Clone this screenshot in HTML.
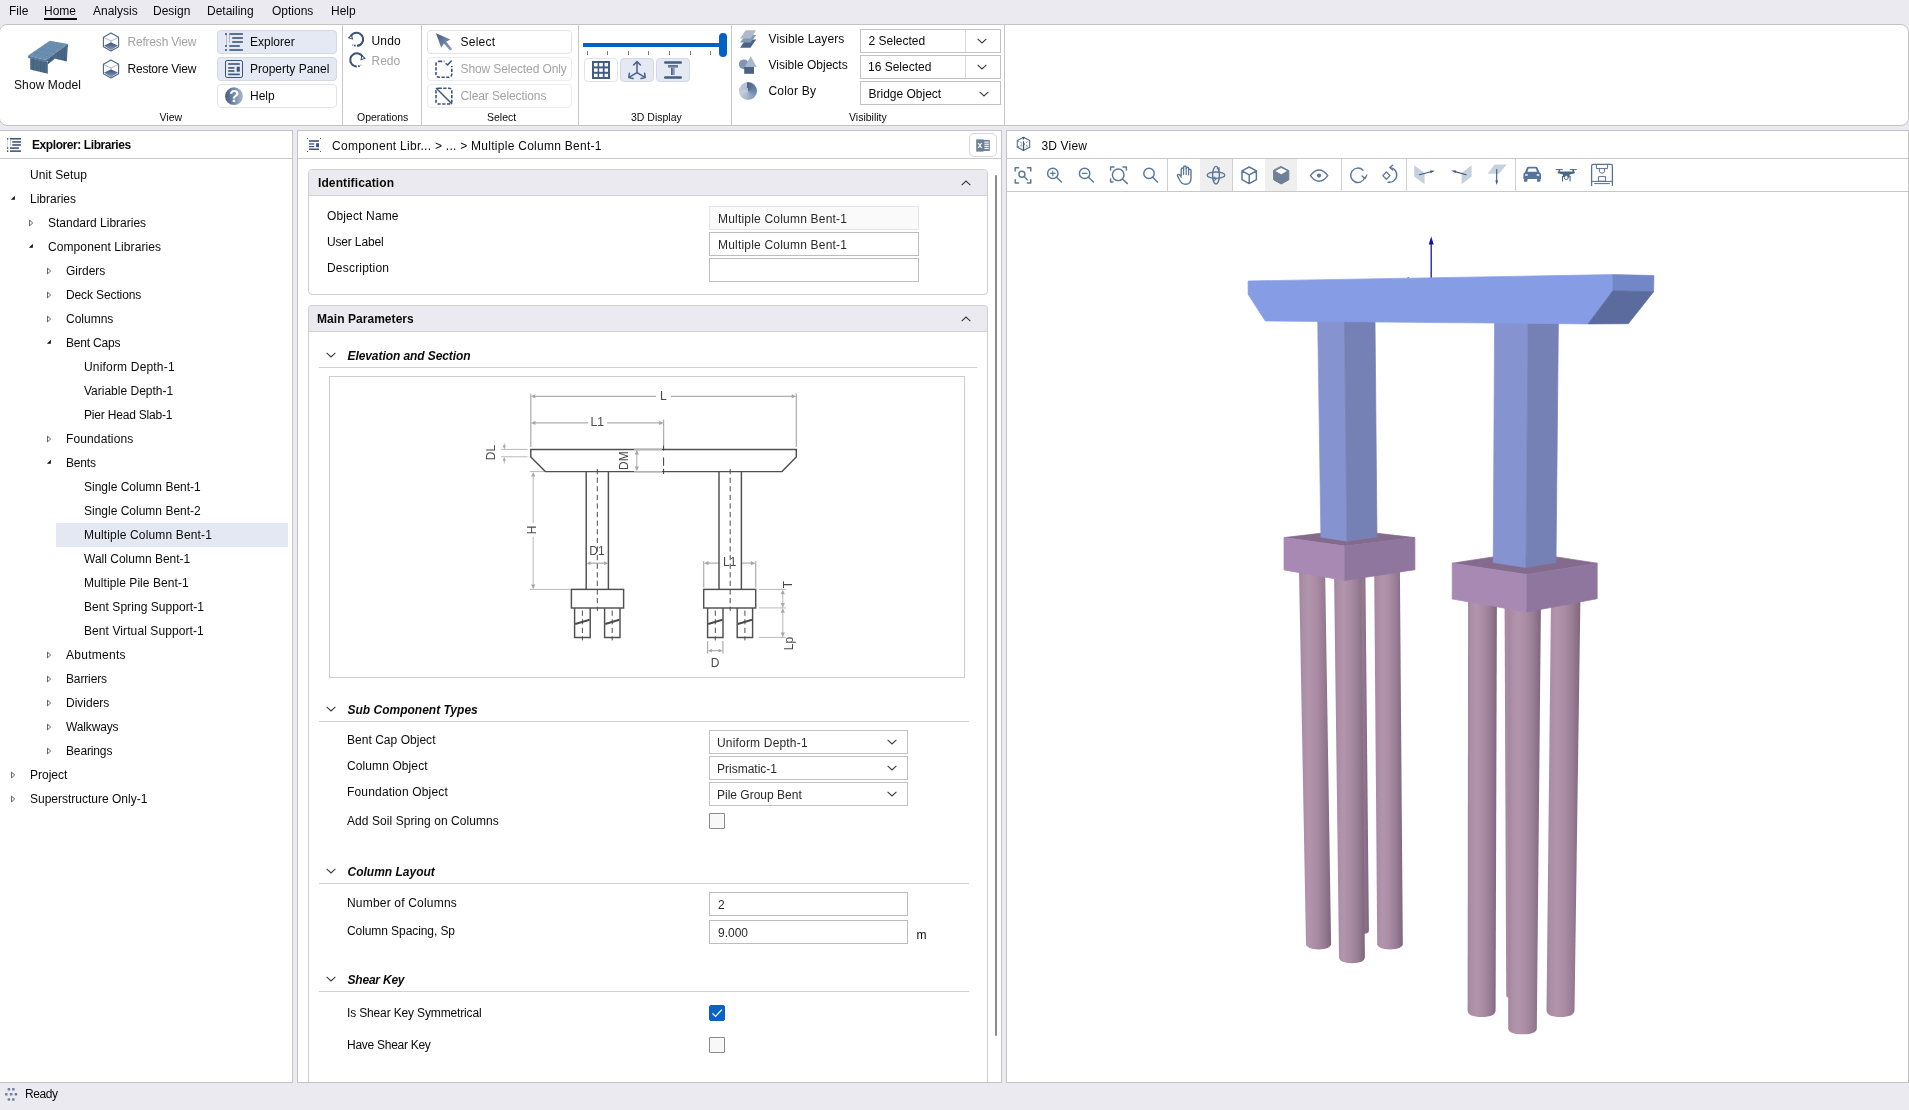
<!DOCTYPE html>
<html>
<head>
<meta charset="utf-8">
<title>Bridge Modeler</title>
<style>
*{box-sizing:border-box;margin:0;padding:0}
html,body{width:1909px;height:1110px;overflow:hidden}
body{background:#ECEAF1;font-family:"Liberation Sans",sans-serif;font-size:12px;color:#111;position:relative}
.a{position:absolute}
.t{position:absolute;white-space:nowrap;line-height:16px;font-size:12px;color:#0A0A0A}
.g{color:#A3A3A3}
.b{font-weight:700}
.bi{font-weight:700;font-style:italic}
.lbl{position:absolute;white-space:nowrap;line-height:14px;font-size:10.5px;color:#0A0A0A}
.panel{position:absolute;background:#fff;border:1px solid #C4C4C4}
.hl{position:absolute;height:1px;background:#C8C8C8}
.vl{position:absolute;width:1px;background:#C8C8C8}
.btn{position:absolute;border:1px solid #E3E3E6;border-radius:4px;background:#fff}
.btn.on{background:#E4E9F3;border-color:#D3D8E2}
.combo{position:absolute;border:1px solid #C2C2C2;background:#fff}
.inp{position:absolute;border:1px solid #BDBDBD;background:#fff}
.chk{position:absolute;width:16px;height:16px;border:1px solid #8A8A8A;background:#F8F8F8;border-radius:1px}
.sec{position:absolute;border:1px solid #CFCFD2;border-radius:4px;background:#fff;overflow:hidden}
.sech{position:absolute;left:0;top:0;right:0;background:#ECEAF1;border-bottom:1px solid #CFCFD2}
svg{position:absolute;overflow:visible}
</style>
</head>
<body>
<div id="root" style="position:absolute;left:0;top:0;width:1909px;height:1110px;will-change:transform">

<!-- ===== MENU BAR ===== -->
<div class="t" style="left:9px;top:3px">File</div>
<div class="t" style="left:44px;top:3px">Home</div>
<div class="a" style="left:44px;top:18px;width:33px;height:2px;background:#0A0A0A"></div>
<div class="t" style="left:93px;top:3px">Analysis</div>
<div class="t" style="left:153px;top:3px">Design</div>
<div class="t" style="left:207px;top:3px">Detailing</div>
<div class="t" style="left:272px;top:3px">Options</div>
<div class="t" style="left:331px;top:3px">Help</div>

<!-- ===== RIBBON ===== -->
<div class="a" id="ribbon" style="left:-1px;top:24px;width:1910px;height:102px;background:#fff;border:1px solid #C4C4C4;border-radius:8px"></div>
<svg width="0" height="0" style="left:0;top:0">
<defs>
<linearGradient id="gh" x1="0" y1="0" x2="1" y2="0"><stop offset="0" stop-color="#435B80"/><stop offset="1" stop-color="#A9B8CE"/></linearGradient>
<linearGradient id="gv" x1="0" y1="0" x2="0" y2="1"><stop offset="0" stop-color="#36507A"/><stop offset="1" stop-color="#8FA2BF"/></linearGradient>
<linearGradient id="gd" x1="0" y1="0" x2="1" y2="1"><stop offset="0" stop-color="#3F5880"/><stop offset="1" stop-color="#93A5C0"/></linearGradient>
<symbol id="cubeh" viewBox="0 0 18 20" overflow="visible">
<path d="M9 1 L16.6 5.2 V14.8 L9 19 L1.4 14.8 V5.2Z" fill="#fff" stroke="#4A6489" stroke-width="1.1" stroke-linejoin="round"/>
<path d="M1.6 5.4 L9 9 L16.4 5.4 M9 9 V11" fill="none" stroke="#6C84A6" stroke-width=".6"/>
<path d="M2 13.6 L9 10.6 L16 13.6 L9 18.2Z" fill="url(#gv)"/>
</symbol>
<symbol id="chev" viewBox="0 0 10 6" overflow="visible"><path d="M.6 .8 L5 5 L9.4 .8" fill="none" stroke="#3A3A3A" stroke-width="1.1"/></symbol>
<symbol id="chevu" viewBox="0 0 10 6" overflow="visible"><path d="M.6 5.2 L5 1 L9.4 5.2" fill="none" stroke="#3A3A3A" stroke-width="1.1"/></symbol>
<symbol id="icoexp" viewBox="0 0 18 18" overflow="visible">
<g fill="#3C5478"><rect x="4.3" y="1.2" width="13.6" height="1.6"/><rect x="7.2" y="5.2" width="10.7" height="1.6"/><rect x="7.2" y="9.2" width="10.7" height="1.6"/><rect x="4.3" y="13.2" width="10.5" height="1.6"/><rect x="4.3" y="17.2" width="13.6" height="1.6"/>
<rect x="0" y="1.2" width="2" height="1.6"/><rect x="0" y="13.2" width="2" height="1.6"/><rect x="0" y="17.2" width="2" height="1.6"/>
<rect x="1.5" y="3" width=".5" height="10" opacity=".6"/><rect x="4.3" y="3" width=".5" height="7.5" opacity=".7"/></g>
</symbol>
<symbol id="icoprop" viewBox="0 0 18 18" overflow="visible">
<rect x=".5" y=".5" width="17" height="17" rx="1.6" fill="none" stroke="#3C5478" stroke-width="1"/>
<g fill="#3C5478"><rect x="3.2" y="3.2" width="11.6" height="1.6"/><rect x="3.2" y="7.1" width="6.2" height="1.6"/><rect x="3.2" y="10.2" width="6.2" height="1.6"/><rect x="3.2" y="13.6" width="11.6" height="1.6"/><rect x="11.7" y="6.7" width="3.1" height="5"/></g>
</symbol>
</defs>
</svg>

<!-- Show Model -->
<svg style="left:27px;top:39px" width="42" height="36" viewBox="27 39 42 36">
<polygon points="54.4,54.6 67.8,45.6 66.9,61.4 54.4,58.6" fill="#4B6885"/>
<polygon points="47.6,60.4 54.8,55.2 54.8,58.8 47.6,64.6" fill="#43607D"/>
<polygon points="30.2,58 47.8,62.2 47.8,73.8 30.2,69.6" fill="#4C6985"/>
<polygon points="28.1,55.5 49.8,40.8 68.1,43.9 45.9,59.9" fill="#6E8FB4"/>
<polygon points="28.1,55.5 45.9,59.9 45.9,62.2 28.1,57.9" fill="#5B7B9E"/>
<polygon points="45.9,59.9 68.1,43.9 68.1,46.2 45.9,62.2" fill="#4A6784"/>
<g stroke="#3F5C79" stroke-width=".7"><line x1="33.4" y1="59" x2="33.4" y2="70.4"/><line x1="37" y1="59.8" x2="37" y2="71.2"/><line x1="40.6" y1="60.7" x2="40.6" y2="72.1"/><line x1="44.2" y1="61.5" x2="44.2" y2="73"/><line x1="58" y1="52.4" x2="58" y2="59.4"/><line x1="61.2" y1="50.2" x2="61.2" y2="60.1"/><line x1="64.4" y1="48" x2="64.4" y2="60.8"/></g>
<g stroke="#5F82A8" stroke-width=".5"><line x1="32.5" y1="56.6" x2="54" y2="41.6"/><line x1="37" y1="57.7" x2="58.4" y2="42.3"/><line x1="41.5" y1="58.8" x2="63" y2="43.1"/><line x1="33" y1="52.2" x2="51" y2="56.4"/><line x1="38.5" y1="48.4" x2="56.5" y2="52.4"/><line x1="44" y1="44.7" x2="62" y2="48.4"/></g>
<g fill="#15B08A"><circle cx="36.4" cy="52.4" r=".5"/><circle cx="36.4" cy="54.5" r=".5"/><circle cx="51.4" cy="49.4" r=".5"/><circle cx="37.4" cy="64.5" r=".5"/></g>
</svg>
<div class="t" style="left:14px;top:77px;letter-spacing:.1px">Show Model</div>

<!-- Refresh / Restore -->
<svg style="left:102px;top:32px" width="18" height="20"><use href="#cubeh"/></svg>
<div class="t g" style="left:127.5px;top:34px;letter-spacing:-.2px">Refresh View</div>
<svg style="left:102px;top:59px" width="18" height="20"><use href="#cubeh"/></svg>
<div class="t" style="left:127.5px;top:61px;letter-spacing:-.2px">Restore View</div>

<!-- Explorer / Property / Help buttons -->
<div class="btn on" style="left:217px;top:30px;width:120px;height:24px"></div>
<svg style="left:225px;top:31px" width="18" height="20" viewBox="0 -1 18 20"><use href="#icoexp" width="18" height="18"/></svg>
<div class="t" style="left:250px;top:34px">Explorer</div>
<div class="btn on" style="left:217px;top:57px;width:120px;height:24px"></div>
<svg style="left:225px;top:60px" width="18" height="18"><use href="#icoprop"/></svg>
<div class="t" style="left:250px;top:61px">Property Panel</div>
<div class="btn" style="left:217px;top:84px;width:120px;height:24px"></div>
<svg style="left:225px;top:87px" width="18" height="18" viewBox="0 0 18 18"><circle cx="9" cy="9.2" r="8.9" fill="url(#gh)"/><text x="9.2" y="15.2" text-anchor="middle" font-family="Liberation Sans" font-weight="700" font-size="16.5" fill="#fff">?</text></svg>
<div class="t" style="left:250px;top:88px">Help</div>
<div class="lbl" style="left:159.5px;top:110px">View</div>
<div class="vl" style="left:342px;top:25px;height:100px"></div>

<!-- Undo / Redo -->
<svg style="left:347px;top:30px" width="20" height="38" viewBox="347 30 20 38">
<g fill="none" stroke="#3C5478" stroke-width="2">
<path d="M350.6 36.3 A6.6 6.6 0 1 1 352.6 44.6" stroke-dasharray="27 1.2 1.6 1.2 10"/>
<path d="M362.6 56.6 A6.6 6.6 0 1 0 361 65" stroke-dasharray="27 1.2 1.6 1.2 10"/>
</g>
<path d="M347.5 38 L352 34.2 L353.2 39.8 Z M349.6 37.6 L351.3 36.2 L351.8 38.4Z" fill="#3C5478" fill-rule="evenodd"/>
<path d="M366 58.6 L361.4 54.6 L360.4 60.4 Z M363.9 58.2 L362.2 56.7 L361.8 59Z" fill="#3C5478" fill-rule="evenodd"/>
</svg>
<div class="t" style="left:371.5px;top:33px;letter-spacing:.2px">Undo</div>
<div class="t g" style="left:371.5px;top:53px">Redo</div>
<div class="lbl" style="left:357px;top:110px">Operations</div>
<div class="vl" style="left:421px;top:25px;height:100px"></div>

<!-- Select group -->
<div class="btn" style="left:427px;top:30px;width:145px;height:24px"></div>
<svg style="left:435px;top:32px" width="18" height="20" viewBox="435 32 18 20"><path d="M436 33.2 L450.4 39.4 L446.2 41.8 L451.8 48.4 Q452.2 49.4 451.2 50.1 Q450.2 50.6 449.5 49.9 L444 43.6 L441.2 47.8Z" fill="url(#gd)"/></svg>
<div class="t" style="left:460.5px;top:34px;letter-spacing:.25px">Select</div>
<div class="btn" style="left:427px;top:57px;width:145px;height:24px;border-color:#ECECEE"></div>
<svg style="left:434px;top:59px" width="20" height="20" viewBox="434 59 20 20"><rect x="436" y="61.4" width="15.8" height="15.8" rx="3" fill="none" stroke="#3C5478" stroke-width="1.6" stroke-dasharray="3.2 1.5"/><rect x="444.5" y="59.5" width="8.5" height="6.5" fill="#fff"/><path d="M445.6 63.2 L447.7 65 L451.6 60.6" fill="none" stroke="#3C5478" stroke-width="1.5"/></svg>
<div class="t g" style="left:460.5px;top:61px;letter-spacing:-.1px">Show Selected Only</div>
<div class="btn" style="left:427px;top:84px;width:145px;height:24px;border-color:#ECECEE"></div>
<svg style="left:434px;top:86px" width="20" height="20" viewBox="434 86 20 20"><rect x="436" y="88.2" width="15.8" height="15.8" rx="2.6" fill="none" stroke="#3C5478" stroke-width="1.6" stroke-dasharray="3.2 1.5"/><path d="M436 88 L452 104" stroke="#3C5478" stroke-width="1.5"/></svg>
<div class="t g" style="left:460.5px;top:88px;letter-spacing:-.1px">Clear Selections</div>
<div class="lbl" style="left:487px;top:110px">Select</div>
<div class="vl" style="left:578px;top:25px;height:100px"></div>
<!-- 3D Display group -->
<div class="a" style="left:583px;top:43px;width:138px;height:4px;background:#0063C1"></div>
<div class="a" style="left:719px;top:33px;width:8px;height:24px;border-radius:4px;background:#0063C1"></div>
<svg style="left:580px;top:50px" width="140" height="6" viewBox="580 50 140 6"><g stroke="#7C7C7C" stroke-width="1"><line x1="587.5" y1="51" x2="587.5" y2="55"/><line x1="607.5" y1="51" x2="607.5" y2="55"/><line x1="628.5" y1="51" x2="628.5" y2="55"/><line x1="648.5" y1="51" x2="648.5" y2="55"/><line x1="669.5" y1="51" x2="669.5" y2="55"/><line x1="690.5" y1="51" x2="690.5" y2="55"/><line x1="710.5" y1="51" x2="710.5" y2="55"/></g></svg>
<div class="btn" style="left:584px;top:58px;width:33.5px;height:23.5px"></div>
<div class="btn on" style="left:620px;top:58px;width:33.5px;height:23.5px"></div>
<div class="btn on" style="left:656px;top:58px;width:33.5px;height:23.5px"></div>
<svg style="left:590px;top:59px" width="100" height="22" viewBox="590 59 100 22">
<rect x="592" y="61" width="18" height="18" fill="#435C82"/>
<g fill="#fff"><rect x="594" y="63" width="3.6" height="3.4"/><rect x="599.2" y="63" width="3.6" height="3.4"/><rect x="604.6" y="63" width="3.4" height="3.4"/><rect x="594" y="68.4" width="3.6" height="3.4"/><rect x="599.2" y="68.4" width="3.6" height="3.4"/><rect x="604.6" y="68.4" width="3.4" height="3.4"/><rect x="594" y="73.8" width="3.6" height="3.2"/><rect x="599.2" y="73.8" width="3.6" height="3.2"/><rect x="604.6" y="73.8" width="3.4" height="3.2"/></g>
<g fill="none" stroke="#4A6387" stroke-width="1.5" stroke-linecap="round" stroke-linejoin="round">
<path d="M637 72.6 V62 M633.6 65 L637 61.6 L640.4 65"/>
<path d="M637 72.6 L629.4 77.2 M629.4 73.2 L628.8 77.6 L633 78.6"/>
<path d="M637 72.6 L644.6 77.2 M644.6 73.2 L645.2 77.6 L641 78.6"/>
</g>
<rect x="664" y="61.2" width="18" height="2.6" rx="1.3" fill="#435C82"/>
<rect x="664" y="76.2" width="18" height="2.6" rx="1.3" fill="#435C82"/>
<rect x="668" y="65.2" width="10" height="2.6" fill="url(#gv)"/>
<rect x="671" y="67.8" width="4" height="7.2" fill="url(#gh)"/>
</svg>
<div class="lbl" style="left:631px;top:110px">3D Display</div>
<div class="vl" style="left:731px;top:25px;height:100px"></div>

<!-- Visibility group -->
<svg style="left:738px;top:28px" width="22" height="74" viewBox="738 28 22 74">
<polygon points="745.7,39.4 756.2,39.4 750.4,47.7 740,47.7" fill="#4A6285"/>
<polygon points="745.7,35 756.2,35 750.7,42.6 740,42.6" fill="#8197B5"/>
<polygon points="745.7,30.2 756.2,30.2 750.7,38.4 740,38.4" fill="#AEBBCD"/>
<circle cx="743.8" cy="64.3" r="4.9" fill="#7F95B3"/>
<rect x="744.2" y="67" width="9.8" height="6.8" fill="#4A6285"/>
<polygon points="750.7,56.2 756.8,66.9 744.6,66.9" fill="#A9B7CB"/>
</svg>
<div class="a" style="left:739px;top:82px;width:18px;height:18px;border-radius:50%;background:conic-gradient(from 350deg,#4A6285 0deg,#5F7A9E 70deg,#7F96B6 130deg,#A8B7CC 200deg,#C3CEDC 270deg,#B4C1D2 330deg,#B4C1D2 360deg)"></div>
<div class="t" style="left:768.5px;top:31px;letter-spacing:.1px">Visible Layers</div>
<div class="t" style="left:768.5px;top:57px">Visible Objects</div>
<div class="t" style="left:768.5px;top:83px;letter-spacing:.2px">Color By</div>
<div class="combo" style="left:860px;top:29px;width:140.5px;height:23.5px"></div>
<div class="vl" style="left:964.5px;top:30px;height:21.5px;background:#DADADA"></div>
<div class="t" style="left:868.5px;top:33px">2 Selected</div>
<svg style="left:977px;top:38px" width="10" height="6"><use href="#chev"/></svg>
<div class="combo" style="left:860px;top:55px;width:140.5px;height:23.5px"></div>
<div class="vl" style="left:964.5px;top:56px;height:21.5px;background:#DADADA"></div>
<div class="t" style="left:868px;top:59px">16 Selected</div>
<svg style="left:977px;top:64px" width="10" height="6"><use href="#chev"/></svg>
<div class="combo" style="left:860px;top:81px;width:140.5px;height:23.5px"></div>
<div class="t" style="left:868.5px;top:86px">Bridge Object</div>
<svg style="left:979px;top:91px" width="10" height="6"><use href="#chev"/></svg>
<div class="lbl" style="left:849px;top:110px">Visibility</div>
<div class="vl" style="left:1004px;top:25px;height:100px"></div>



<!-- ===== EXPLORER PANEL ===== -->
<div class="panel" style="left:-1px;top:130px;width:294px;height:953px"></div>
<div class="hl" style="left:0;top:158px;width:292px"></div>
<svg style="left:7px;top:138px" width="14" height="14" viewBox="0 0 14 14"><g fill="#3C5478"><rect x="2.9" y="0" width="11.1" height="1.55"/><rect x="5.3" y="3.15" width="8.7" height="1.55"/><rect x="5.3" y="6.2" width="8.7" height="1.55"/><rect x="2.9" y="9.3" width="9" height="1.55"/><rect x="2.9" y="12.35" width="11.1" height="1.55"/><rect x="0" y="0" width="1.3" height="1.55"/><rect x="0" y="9.3" width="1.3" height="1.55"/><rect x="0" y="12.35" width="1.3" height="1.55"/><rect x=".3" y="1.5" width=".6" height="8" opacity=".35"/><rect x="3.1" y="1.5" width=".7" height="6" opacity=".45"/></g></svg>
<div class="t b" style="left:32px;top:137px;letter-spacing:-.42px">Explorer: Libraries</div>
<div class="a" style="left:56px;top:523px;width:232px;height:24px;background:#E4E8F2"></div>
<div class="t" style="left:30px;top:167px;letter-spacing:0.11px">Unit Setup</div>
<div class="t" style="left:30px;top:191px">Libraries</div>
<div class="t" style="left:48px;top:215px">Standard Libraries</div>
<div class="t" style="left:48px;top:239px;letter-spacing:0.09px">Component Libraries</div>
<div class="t" style="left:66px;top:263px">Girders</div>
<div class="t" style="left:66px;top:287px;letter-spacing:-0.12px">Deck Sections</div>
<div class="t" style="left:66px;top:311px">Columns</div>
<div class="t" style="left:66px;top:335px;letter-spacing:-0.2px">Bent Caps</div>
<div class="t" style="left:84px;top:359px;letter-spacing:0.18px">Uniform Depth-1</div>
<div class="t" style="left:84px;top:383px">Variable Depth-1</div>
<div class="t" style="left:84px;top:407px;letter-spacing:-0.19px">Pier Head Slab-1</div>
<div class="t" style="left:66px;top:431px;letter-spacing:0.12px">Foundations</div>
<div class="t" style="left:66px;top:455px;letter-spacing:-0.2px">Bents</div>
<div class="t" style="left:84px;top:479px">Single Column Bent-1</div>
<div class="t" style="left:84px;top:503px">Single Column Bent-2</div>
<div class="t" style="left:84px;top:527px;letter-spacing:0.15px">Multiple Column Bent-1</div>
<div class="t" style="left:84px;top:551px">Wall Column Bent-1</div>
<div class="t" style="left:84px;top:575px;letter-spacing:0.07px">Multiple Pile Bent-1</div>
<div class="t" style="left:84px;top:599px;letter-spacing:0.06px">Bent Spring Support-1</div>
<div class="t" style="left:84px;top:623px;letter-spacing:0.09px">Bent Virtual Support-1</div>
<div class="t" style="left:66px;top:647px;letter-spacing:0.28px">Abutments</div>
<div class="t" style="left:66px;top:671px;letter-spacing:-0.14px">Barriers</div>
<div class="t" style="left:66px;top:695px">Dividers</div>
<div class="t" style="left:66px;top:719px;letter-spacing:-0.14px">Walkways</div>
<div class="t" style="left:66px;top:743px;letter-spacing:-0.14px">Bearings</div>
<div class="t" style="left:30px;top:767px">Project</div>
<div class="t" style="left:30px;top:791px">Superstructure Only-1</div>
<svg style="left:0;top:160px" width="80" height="660" viewBox="0 160 80 660"><path d="M14.9 199.8 v-4 l-4 4z" fill="#111"/><path d="M29.5 220.1 l3.2 2.9 l-3.2 2.9z" fill="#fff" stroke="#555" stroke-width=".9" stroke-linejoin="round"/><path d="M32.9 247.8 v-4 l-4 4z" fill="#111"/><path d="M47.5 268.1 l3.2 2.9 l-3.2 2.9z" fill="#fff" stroke="#555" stroke-width=".9" stroke-linejoin="round"/><path d="M47.5 292.1 l3.2 2.9 l-3.2 2.9z" fill="#fff" stroke="#555" stroke-width=".9" stroke-linejoin="round"/><path d="M47.5 316.1 l3.2 2.9 l-3.2 2.9z" fill="#fff" stroke="#555" stroke-width=".9" stroke-linejoin="round"/><path d="M50.9 343.8 v-4 l-4 4z" fill="#111"/><path d="M47.5 436.1 l3.2 2.9 l-3.2 2.9z" fill="#fff" stroke="#555" stroke-width=".9" stroke-linejoin="round"/><path d="M50.9 463.8 v-4 l-4 4z" fill="#111"/><path d="M47.5 652.1 l3.2 2.9 l-3.2 2.9z" fill="#fff" stroke="#555" stroke-width=".9" stroke-linejoin="round"/><path d="M47.5 676.1 l3.2 2.9 l-3.2 2.9z" fill="#fff" stroke="#555" stroke-width=".9" stroke-linejoin="round"/><path d="M47.5 700.1 l3.2 2.9 l-3.2 2.9z" fill="#fff" stroke="#555" stroke-width=".9" stroke-linejoin="round"/><path d="M47.5 724.1 l3.2 2.9 l-3.2 2.9z" fill="#fff" stroke="#555" stroke-width=".9" stroke-linejoin="round"/><path d="M47.5 748.1 l3.2 2.9 l-3.2 2.9z" fill="#fff" stroke="#555" stroke-width=".9" stroke-linejoin="round"/><path d="M11.5 772.1 l3.2 2.9 l-3.2 2.9z" fill="#fff" stroke="#555" stroke-width=".9" stroke-linejoin="round"/><path d="M11.5 796.1 l3.2 2.9 l-3.2 2.9z" fill="#fff" stroke="#555" stroke-width=".9" stroke-linejoin="round"/></svg>


<!-- ===== PROPERTY PANEL ===== -->
<div class="panel" style="left:297px;top:130px;width:705px;height:953px"></div>
<div class="hl" style="left:298px;top:158px;width:703px"></div>
<svg style="left:307px;top:138px" width="14" height="14" viewBox="0 0 14 14"><g fill="#3C5478"><rect x="2" y="2.2" width="10" height="1.6"/><rect x="2" y="5.3" width="5.2" height="1.3"/><rect x="2" y="8" width="5.2" height="1.2"/><rect x="9.1" y="5.2" width="2.9" height="4"/><rect x="2" y="10.5" width="10" height="1.5"/><rect x="0" y="0" width="1" height="1"/><rect x="13" y="0" width="1" height="1"/><rect x="0" y="13" width="1" height="1"/><rect x="13" y="13" width="1" height="1"/></g></svg>
<div class="t" style="left:332px;top:138px;letter-spacing:.27px">Component Libr... &gt; ... &gt; Multiple Column Bent-1</div>
<!-- excel button -->
<div class="btn" style="left:969px;top:133px;width:28px;height:24px;border-color:#D6D6DA;border-radius:5px"></div>
<svg style="left:976px;top:139px" width="14" height="13" viewBox="0 0 14 13"><rect x="6.6" y=".9" width="7.2" height="11" fill="#6E8096"/><g fill="#fff"><rect x="8.4" y="2.6" width="4.4" height="1.1"/><rect x="8.4" y="4.7" width="4.4" height="1.1"/><rect x="8.4" y="6.8" width="4.4" height="1.1"/><rect x="8.4" y="8.9" width="4.4" height="1.1"/></g><rect x=".2" y=".4" width="7.4" height="12.2" fill="#6E8096"/><path d="M2.2 4 L5.6 9 M5.6 4 L2.2 9" stroke="#fff" stroke-width="1.15"/></svg>
<!-- scrollbar -->
<div class="a" style="left:995px;top:175px;width:2px;height:861px;background:#8B8B8B;border-radius:1px"></div>

<!-- Identification -->
<div class="sec" style="left:308px;top:169px;width:680px;height:126px"><div class="sech" style="height:26px"></div></div>
<div class="t b" style="left:318px;top:175px;letter-spacing:.1px">Identification</div>
<svg style="left:961px;top:180px" width="10" height="6"><use href="#chevu"/></svg>
<div class="t" style="left:327px;top:208px;letter-spacing:.15px">Object Name</div>
<div class="t" style="left:327px;top:234px;letter-spacing:-.16px">User Label</div>
<div class="t" style="left:327px;top:260px;letter-spacing:.2px">Description</div>
<div class="inp" style="left:709px;top:206px;width:210px;height:23.5px;background:#FAFAFA;border-color:#E6E6E6"></div>
<div class="inp" style="left:709px;top:232px;width:210px;height:23.5px"></div>
<div class="inp" style="left:709px;top:258px;width:210px;height:23.5px"></div>
<div class="t" style="left:718px;top:211px;letter-spacing:.2px;color:#2A2A2A">Multiple Column Bent-1</div>
<div class="t" style="left:718px;top:237px;letter-spacing:.2px;color:#2A2A2A">Multiple Column Bent-1</div>

<!-- Main Parameters -->
<div class="sec" style="left:308px;top:305px;width:680px;height:780px;border-bottom:none;border-radius:4px 4px 0 0"><div class="sech" style="height:26px"></div></div>
<div class="t b" style="left:317px;top:311px;letter-spacing:.05px">Main Parameters</div>
<svg style="left:961px;top:316px" width="10" height="6"><use href="#chevu"/></svg>

<svg style="left:326px;top:352px" width="10" height="6"><use href="#chev"/></svg>
<div class="t bi" style="left:347.5px;top:348px;letter-spacing:-.08px">Elevation and Section</div>
<div class="hl" style="left:319px;top:367px;width:658px;background:#D2D2D2"></div>
<div class="a" style="left:329px;top:376px;width:636px;height:302px;border:1px solid #CDCDCD;background:#fff"></div>
<svg style="left:330px;top:377px" width="634" height="300" viewBox="330 377 634 300" font-family="Liberation Sans" fill="none">
<defs>
<path id="ah" d="M0 0 L4.6 -2.1 V2.1Z" fill="#A8A8A8" stroke="none"/>
</defs>
<!-- dimension (light) lines -->
<g stroke="#B0B0B0" stroke-width="1.25">
<path d="M530.8 393.4 V447 M796.3 393.4 V447 M535 396.3 H656 M671 396.3 H792"/>
<path d="M535 422.9 H588 M607 422.9 H659.5 M663.6 419.6 V445.4"/>
<path d="M501 449.4 H527.6 M501 456.8 H527.6 M504.3 443.3 V447 M504.3 459.4 V463.4" stroke-width=".9"/>
<path d="M529.8 471.6 H545 M529.8 589.4 H584 M533.2 476 V523 M533.2 537 V585.4" stroke-width=".9"/>
<path d="M590 563.2 H604.6"/>
<path d="M703.7 560.9 V587.6 M755.7 560.9 V587.6 M707.8 563.2 H718.4 M742 563.2 H751.6"/>
<path d="M759 589.4 H786 M759 607.9 H786 M759 637.4 H786 M782.8 593.4 V603.9 M782.8 612 V633.4" stroke-width=".9"/>
<path d="M707.6 641 V653.6 M722.9 641 V653.6 M711.6 650.7 H718.9"/>
</g>
<!-- arrowheads -->
<g>
<use href="#ah" transform="translate(530.8 396.3)"/><use href="#ah" transform="translate(796.3 396.3) rotate(180)"/>
<use href="#ah" transform="translate(530.8 422.9)"/><use href="#ah" transform="translate(663.6 422.9) rotate(180)"/>
<use href="#ah" transform="translate(504.3 449.2) rotate(-90) scale(.8)"/><use href="#ah" transform="translate(504.3 457) rotate(90) scale(.8)"/>
<use href="#ah" transform="translate(533.2 472) rotate(90)"/><use href="#ah" transform="translate(533.2 589.2) rotate(-90)"/>
<use href="#ah" transform="translate(586.4 563.2) scale(.9)"/><use href="#ah" transform="translate(608.2 563.2) rotate(180) scale(.9)"/>
<use href="#ah" transform="translate(703.9 563.2)"/><use href="#ah" transform="translate(755.5 563.2) rotate(180)"/>
<use href="#ah" transform="translate(782.8 589.6) rotate(90)"/><use href="#ah" transform="translate(782.8 607.7) rotate(-90)"/>
<use href="#ah" transform="translate(782.8 608.1) rotate(90)"/><use href="#ah" transform="translate(782.8 637.2) rotate(-90)"/>
<use href="#ah" transform="translate(707.8 650.7) scale(.9)"/><use href="#ah" transform="translate(722.7 650.7) rotate(180) scale(.9)"/>
</g>
<!-- structure (dark) lines -->
<g stroke="#505050" stroke-width="1.45" stroke-linejoin="miter">
<path d="M530.8 449.4 H796.3 V457 L782 471.6 H545.4 L530.8 457Z" fill="#fff"/>
<path d="M586.2 471.6 V589.4 M608.4 471.6 V589.4 M719 471.6 V589.4 M741.4 471.6 V589.4"/>
<rect x="571.4" y="589.4" width="52.2" height="18.6" fill="#fff"/>
<rect x="703.7" y="589.4" width="52" height="18.6" fill="#fff"/>
<path d="M574.6 608 V637.4 H590.2 V608 M604.6 608 V637.4 H620 V608 M707.6 608 V637.4 H723 V608 M737.2 608 V637.4 H752.6 V608"/>
</g>
<g stroke="#4C4C4C" stroke-width="2">
<path d="M575.2 624 L589.6 619.8 M605.2 624 L619.4 619.8 M708.2 624 L722.4 619.8 M737.8 624 L752 619.8"/>
</g>
<g stroke="#4C4C4C" stroke-width="1" stroke-dasharray="5.2 3.4">
<path d="M597.3 469 V611 M730.2 469 V611"/>
<path d="M582.4 610.6 V640.4 M612.2 610.6 V640.4 M715.3 610.6 V640.4 M744.9 610.6 V640.4"/>
</g>
<path d="M663.6 445.4 V450.6 M663.6 457.4 V465.8 M663.6 468.8 V474" stroke="#3A3A3A" stroke-width="1"/>
<!-- overlay light ext lines across cap at DM -->
<path d="M634 449.4 H662 M634 471.6 H662 M636.8 453.5 V467.5" stroke="#B4B4B4" stroke-width="1.1"/>
<use href="#ah" transform="translate(636.8 449.8) rotate(90)"/><use href="#ah" transform="translate(636.8 471.2) rotate(-90)"/>
<!-- labels -->
<g fill="#4A4A4A" stroke="none" font-size="12px" text-anchor="middle">
<text x="663.4" y="399.8">L</text>
<text x="597.2" y="426">L1</text>
<text x="597" y="554.5">D1</text>
<text x="729.8" y="566">L1</text>
<text x="715" y="666.8">D</text>
<text transform="translate(495 452.6) rotate(-90)">DL</text>
<text transform="translate(628 460.6) rotate(-90)">DM</text>
<text transform="translate(536 530) rotate(-90)">H</text>
<text transform="translate(791.6 584.7) rotate(-90)">T</text>
<text transform="translate(793.4 643.5) rotate(-90)">Lp</text>
</g>
</svg>


<svg style="left:326px;top:706px" width="10" height="6"><use href="#chev"/></svg>
<div class="t bi" style="left:347.5px;top:702px">Sub Component Types</div>
<div class="hl" style="left:319px;top:721px;width:650px;background:#D2D2D2"></div>
<div class="t" style="left:347px;top:732px;letter-spacing:.03px">Bent Cap Object</div>
<div class="t" style="left:347px;top:758px;letter-spacing:.1px">Column Object</div>
<div class="t" style="left:347px;top:784px;letter-spacing:.17px">Foundation Object</div>
<div class="t" style="left:347px;top:813px;letter-spacing:.07px">Add Soil Spring on Columns</div>
<div class="combo" style="left:709px;top:730px;width:199px;height:24px"></div>
<div class="combo" style="left:709px;top:756px;width:199px;height:24px"></div>
<div class="combo" style="left:709px;top:782px;width:199px;height:24px"></div>
<div class="t" style="left:717px;top:735px;color:#2A2A2A;letter-spacing:.18px">Uniform Depth-1</div>
<div class="t" style="left:717px;top:761px;color:#2A2A2A">Prismatic-1</div>
<div class="t" style="left:717px;top:787px;color:#2A2A2A">Pile Group Bent</div>
<svg style="left:887px;top:739px" width="10" height="6"><use href="#chev"/></svg>
<svg style="left:887px;top:765px" width="10" height="6"><use href="#chev"/></svg>
<svg style="left:887px;top:791px" width="10" height="6"><use href="#chev"/></svg>
<div class="chk" style="left:709px;top:813px"></div>

<svg style="left:326px;top:868px" width="10" height="6"><use href="#chev"/></svg>
<div class="t bi" style="left:347.5px;top:864px">Column Layout</div>
<div class="hl" style="left:319px;top:883px;width:650px;background:#D2D2D2"></div>
<div class="t" style="left:347px;top:895px;letter-spacing:.19px">Number of Columns</div>
<div class="t" style="left:347px;top:923px;letter-spacing:-.08px">Column Spacing, Sp</div>
<div class="inp" style="left:709px;top:892px;width:199px;height:23.5px"></div>
<div class="inp" style="left:709px;top:920px;width:199px;height:23.5px"></div>
<div class="t" style="left:718px;top:897px;color:#2A2A2A">2</div>
<div class="t" style="left:718px;top:925px;color:#2A2A2A">9.000</div>
<div class="t" style="left:916.5px;top:927px">m</div>

<svg style="left:326px;top:976px" width="10" height="6"><use href="#chev"/></svg>
<div class="t bi" style="left:347.5px;top:972px;letter-spacing:-.21px">Shear Key</div>
<div class="hl" style="left:319px;top:991px;width:650px;background:#D2D2D2"></div>
<div class="t" style="left:347px;top:1005px;letter-spacing:-.15px">Is Shear Key Symmetrical</div>
<div class="t" style="left:347px;top:1037px;letter-spacing:-.27px">Have Shear Key</div>
<div class="chk" style="left:709px;top:1005px;background:#0A63C4;border-color:#0A63C4;border-radius:2px"></div>
<svg style="left:709px;top:1005px" width="16" height="16"><path d="M3.4 8.4 L6.6 11.4 L12.8 4.6" fill="none" stroke="#fff" stroke-width="1.3"/></svg>
<div class="chk" style="left:709px;top:1037px"></div>
<!-- cover bottom overflow of main params section -->
<div class="a" style="left:298px;top:1082px;width:703px;height:1px;background:#C4C4C4"></div>


<!-- ===== 3D VIEW PANEL ===== -->
<div class="panel" style="left:1006px;top:130px;width:903px;height:953px"></div>
<div class="hl" style="left:1007px;top:158px;width:901px"></div>
<div class="hl" style="left:1007px;top:191px;width:901px"></div>
<!-- header -->
<svg style="left:1016px;top:136px" width="15" height="16" viewBox="0 0 15 16" fill="none" stroke="#5C6E86" stroke-width="1.1" stroke-linejoin="round"><path d="M1.3 11.2 L7.5 8.2 L13.7 11.2 L7.5 14.6Z" fill="#E6EBF2" stroke="none"/><path d="M7.5 1.3 L13.7 4.6 V11.2 L7.5 14.6 L1.3 11.2 V4.6Z"/><path d="M7.5 5.2 V15 M6.2 1.7 H8.8 M7.5 1.6 V3.4" stroke="#44566F" stroke-width="1.1"/><path d="M1.6 4.8 L7.5 8 L13.4 4.8 M1.6 11 L7.5 8 L13.4 11" stroke-dasharray="1.7 1.5" stroke-width=".9"/></svg>
<div class="t" style="left:1041.5px;top:138px;letter-spacing:.15px">3D View</div>
<!-- toolbar selected backgrounds -->
<div class="a" style="left:1200px;top:159px;width:32px;height:32px;background:#EFEFEF"></div>
<div class="a" style="left:1265px;top:159px;width:32px;height:32px;background:#EFEFEF"></div>
<div class="vl" style="left:1167px;top:159px;height:32px;background:#D0D0D0"></div>
<div class="vl" style="left:1232px;top:159px;height:32px;background:#D0D0D0"></div>
<div class="vl" style="left:1341px;top:159px;height:32px;background:#D0D0D0"></div>
<div class="vl" style="left:1406px;top:159px;height:32px;background:#D0D0D0"></div>
<div class="vl" style="left:1515px;top:159px;height:32px;background:#D0D0D0"></div>
<svg style="left:1008px;top:159px" width="620" height="32" viewBox="1008 159 620 32" fill="none" stroke="#5B7799" stroke-width="1.45" stroke-linecap="round" stroke-linejoin="round">
<!-- 1 focus -->
<path d="M1015.2 171 V167.8 H1018.6 M1027.4 167.8 H1030.8 V171 M1030.8 179.8 V183 H1027.4 M1018.6 183 H1015.2 V179.8"/>
<circle cx="1021.9" cy="174.2" r="3"/><path d="M1024.2 176.6 L1027.2 179.8"/>
<!-- 2 zoom in -->
<circle cx="1052.8" cy="173.4" r="5.2"/><path d="M1056.6 177.2 L1061.4 182"/><path d="M1050.4 173.4 H1055.2 M1052.8 171 V175.8" stroke-width="1.1"/>
<!-- 3 zoom out -->
<circle cx="1084.6" cy="173.4" r="5.2"/><path d="M1088.4 177.2 L1093.4 182"/><path d="M1082.2 173.4 H1087" stroke-width="1.1"/>
<!-- 4 extents -->
<path d="M1110.6 170 V167 H1114 M1123 167 H1126.4 V170 M1110.6 179 V182 H1113"/>
<circle cx="1118.2" cy="174.8" r="5.8"/><path d="M1122.4 179 L1127.4 183.6"/>
<!-- 5 search -->
<circle cx="1149" cy="173.4" r="5.2"/><path d="M1152.8 177.2 L1157.4 182"/>
<!-- hand -->
<path d="M1181.2 175.6 V169.4 Q1181.2 168 1182.4 168 Q1183.6 168 1183.6 169.4 V167.4 Q1183.6 166 1184.9 166 Q1186.2 166 1186.2 167.4 V168.4 Q1186.2 167.2 1187.4 167.2 Q1188.6 167.2 1188.6 168.6 V170.2 Q1188.6 169.2 1189.8 169.2 Q1191 169.2 1191 170.6 V178 Q1191 184.2 1185.6 184.2 Q1181.8 184.2 1180.2 181 L1177.6 176.2 Q1177 174.8 1178.2 174.4 Q1179.2 174.2 1180 175.4 L1181.2 177.2" stroke-width="1.4"/>
<path d="M1183.6 169.4 V174.4 M1186.2 168.4 V174.4 M1188.6 170.2 V174.8" stroke-width="1.2"/>
<!-- orbit -->
<ellipse cx="1216" cy="175.2" rx="3.4" ry="8.8" stroke-width="1.4"/><ellipse cx="1216" cy="175.2" rx="8.8" ry="3.2" stroke-width="1.4"/>
<path d="M1214 177 L1216.4 178.6 L1214.4 180.4 M1217.2 168.6 L1219.2 170 L1219 167.6" stroke-width="1.1"/>
<!-- cube outline -->
<path d="M1249.2 167 L1256.4 170.8 V179.6 L1249.2 183.6 L1242 179.6 V170.8Z M1242 170.8 L1249.2 174.8 L1256.4 170.8 M1249.2 174.8 V183.6" stroke-width="1.5"/>
<!-- cube solid -->
<path d="M1281.2 166.6 L1288.8 170.6 V179.8 L1281.2 184 L1273.6 179.8 V170.6Z" fill="#6E8096" stroke="#6E8096" stroke-width="1"/>
<path d="M1281.2 168 L1287 171 L1281.2 174.2 L1275.4 171Z" fill="#fff" stroke="none"/>
<!-- eye -->
<path d="M1310.4 175.6 Q1319 164.4 1327.8 175.6 Q1319 186.8 1310.4 175.6Z" stroke-width="1.4"/><circle cx="1319" cy="175.6" r="2.1" fill="#5B7799" stroke="none"/>
<!-- rotate cw -->
<path d="M1364.8 177.4 A7.2 7.2 0 1 1 1363 170.2"/><path d="M1362 176 L1365 178.6 L1366.8 175" stroke-width="1.3"/>
<!-- rotate diamond -->
<path d="M1390.4 167.6 A7.4 7.4 0 1 1 1388 182.2"/><path d="M1392.6 165.2 L1389.8 167.6 L1392.6 170" stroke-width="1.3"/>
<path d="M1386.4 172 L1390 175.6 L1386.4 179.2 L1382.8 175.6Z" stroke-width="1.3"/>
<!-- plane 1 -->
<polygon points="1414.2,165.2 1424.6,173 1424.6,184.2 1414.2,176.4" fill="#C6D1DE" stroke="none"/>
<path d="M1419.4 174.8 L1431 171.8" stroke="#3F587B" stroke-width="1.1"/><path d="M1434.8 170.8 L1430 170.6 L1430.8 173.2Z" fill="#3F587B" stroke="none"/>
<!-- plane 2 -->
<polygon points="1461.6,173 1471.6,165.2 1471.6,176.4 1461.6,184.2" fill="#C6D1DE" stroke="none"/>
<path d="M1466.2 174.8 L1455 171.6" stroke="#3F587B" stroke-width="1.1"/><path d="M1451.2 170.6 L1455.4 173 L1456.2 170.4Z" fill="#3F587B" stroke="none"/>
<!-- plane 3 -->
<polygon points="1487.6,173.8 1494.6,164.6 1506.8,164.6 1498.8,173.8" fill="#C6D1DE" stroke="none"/>
<path d="M1496.7 169.6 V181" stroke="#3F587B" stroke-width="1.1"/><path d="M1496.7 185 L1495.3 180.4 H1498.1Z" fill="#3F587B" stroke="none"/>
<!-- car -->
<g stroke="none" fill="#54749A">
<path d="M1526.6 168.2 Q1527.2 166.8 1528.8 166.8 H1535.6 Q1537.2 166.8 1537.8 168.2 L1539.6 172.4 Q1541 173 1541 174.6 V179 H1523.4 V174.6 Q1523.4 173 1524.8 172.4Z"/>
<rect x="1524" y="178.4" width="3.4" height="3.4" rx=".8"/><rect x="1537" y="178.4" width="3.4" height="3.4" rx=".8"/>
</g>
<path d="M1527.4 171.8 L1528.6 168.6 H1535.8 L1537 171.8Z" fill="#fff" stroke="none"/>
<g fill="#fff" stroke="none"><rect x="1525" y="174.2" width="2.8" height="1.5" rx=".6"/><rect x="1536.6" y="174.2" width="2.8" height="1.5" rx=".6"/></g>
<!-- drone -->
<g stroke="none" fill="#47648A">
<rect x="1555.8" y="169" width="7" height=".9"/><rect x="1569.8" y="169" width="7" height=".9"/>
<rect x="1558.6" y="169.6" width="1.6" height="2.2"/><rect x="1572.4" y="169.6" width="1.6" height="2.2"/>
<path d="M1557.8 171.4 H1574.8 V173.2 L1569.6 174.6 V177 H1563 V174.6 L1557.8 173.2Z"/>
<rect x="1562" y="176" width="1.1" height="5.4"/><rect x="1569.5" y="176" width="1.1" height="5.4"/>
</g>
<circle cx="1566.3" cy="177.6" r="2" fill="#fff" stroke="#47648A" stroke-width=".9"/>
<!-- printer -->
<g stroke="#5A7090" stroke-width="1.3" stroke-linecap="butt">
<path d="M1591.6 186 V166 Q1591.6 164.4 1593.2 164.4 H1610.8 Q1612.4 164.4 1612.4 166 V186"/>
<path d="M1594.2 183.6 H1609.8 M1592 181.4 H1612" stroke-width="1"/>
<path d="M1596.4 165 V168.6 H1607.6 V165 M1599.4 168.6 V171.4 L1600.6 173 H1603.4 L1604.6 171.4 V168.6" stroke-width="1"/>
<rect x="1598.4" y="176.6" width="7.2" height="4.6" stroke-width="1"/>
</g>
</svg>
<svg style="left:1007px;top:192px" width="901" height="889" viewBox="1007 192 901 889" shape-rendering="geometricPrecision">
<defs>
<linearGradient id="pg" x1="0" y1="0" x2="1" y2="0">
<stop offset="0" stop-color="#A2869E"/><stop offset=".12" stop-color="#AC8FA6"/><stop offset=".3" stop-color="#B295AC"/><stop offset=".55" stop-color="#A98CA4"/><stop offset=".8" stop-color="#957A91"/><stop offset="1" stop-color="#7F667C"/>
</linearGradient>
</defs>
<!-- axis arrow -->
<path d="M1431.2 244 V278" stroke="#1616A0" stroke-width="1.3"/>
<path d="M1431.2 236.6 L1433.7 244.6 H1428.7Z" fill="#1616A0"/>
<path d="M1406.6 278.2 L1408.4 276.8 L1409.4 278.2Z" fill="#2FA030"/>
<!-- piles left group -->
<path d="M1338 575 L1365.4 575 L1368.9 931 Q1368.6 934 1362 934 L1342 934Z" fill="url(#pg)"/>
<path d="M1299 570 L1325.1 570 L1331.1 944.3 Q1330.6 949.4 1318.6 949.4 Q1306.4 949.4 1306 944.3Z" fill="url(#pg)"/>
<path d="M1374.2 570 L1399.9 570 L1402.8 944.3 Q1402.4 949.4 1390 949.4 Q1377.6 949.4 1377.2 944.3Z" fill="url(#pg)"/>
<path d="M1334.1 576 L1361.4 576 L1364.9 957.6 Q1364.4 963.3 1352 963.3 Q1339.5 963.3 1339 957.6Z" fill="url(#pg)"/>
<!-- piles right group -->
<path d="M1504.6 606 L1536 606 L1534 998.3 L1512 998.3 Q1506.4 998.3 1506.2 995.6Z" fill="url(#pg)"/>
<path d="M1468.1 598 L1496.9 598 L1495.6 1010.5 Q1495.2 1017 1481.6 1017 Q1468 1017 1467.6 1010.5Z" fill="url(#pg)"/>
<path d="M1551 598 L1580.4 598 L1574.5 1010.5 Q1574 1017 1560.5 1017 Q1547 1017 1546.5 1010.5Z" fill="url(#pg)"/>
<path d="M1508.2 608 L1540.9 608 L1536.8 1028.2 Q1536.4 1034.3 1522.5 1034.3 Q1508.6 1034.3 1508.2 1028.2Z" fill="url(#pg)"/>
<!-- left footing -->
<polygon points="1284,537.6 1320.5,533.3 1377.2,533.3 1414.9,537.6 1344.8,546.1" fill="#846B8D" stroke="#846B8D" stroke-width=".7" stroke-linejoin="round"/>
<polygon points="1284,537.6 1344.8,546.1 1344.8,580.5 1284,570" fill="#A789B4" stroke="#A789B4" stroke-width=".7" stroke-linejoin="round"/>
<polygon points="1344.8,546.1 1414.9,537.6 1414.9,569.7 1344.8,580.5" fill="#8F769E" stroke="#8F769E" stroke-width=".7" stroke-linejoin="round"/>
<!-- right footing -->
<polygon points="1452.2,563.2 1493.2,556.9 1556.2,556.9 1597.2,563.2 1526.9,574.5" fill="#846B8D" stroke="#846B8D" stroke-width=".7" stroke-linejoin="round"/>
<polygon points="1452.2,563.2 1526.9,574.5 1526.9,612.1 1452.2,599" fill="#A789B4" stroke="#A789B4" stroke-width=".7" stroke-linejoin="round"/>
<polygon points="1526.9,574.5 1597.2,563.2 1597.2,598.7 1526.9,612.1" fill="#8F769E" stroke="#8F769E" stroke-width=".7" stroke-linejoin="round"/>
<!-- left column -->
<polygon points="1317.7,320 1344.5,320 1347,541.2 1320.9,537.1" fill="#8693D1" stroke="#8693D1" stroke-width=".7" stroke-linejoin="round"/>
<polygon points="1344.5,320 1375,320 1377,536.9 1347,541.2" fill="#7580B4" stroke="#7580B4" stroke-width=".7" stroke-linejoin="round"/>
<!-- right column -->
<polygon points="1494.6,321 1528.1,321 1526,567.5 1493.2,562.5" fill="#8693D1" stroke="#8693D1" stroke-width=".7" stroke-linejoin="round"/>
<polygon points="1528.1,321 1558.4,321 1556,562.5 1526,567.5" fill="#7580B4" stroke="#7580B4" stroke-width=".7" stroke-linejoin="round"/>
<!-- cap -->
<polygon points="1248.1,281 1612.9,274.6 1612.9,290.8 1588,323.9 1265.3,321 1248.1,294.3" fill="#869CE5" stroke="#869CE5" stroke-width=".7" stroke-linejoin="round"/>
<polygon points="1612.9,274.6 1653.9,275.5 1653.6,291.7 1612.9,290.8" fill="#7287C8" stroke="#7287C8" stroke-width=".7" stroke-linejoin="round"/>
<polygon points="1612.9,290.8 1653.6,291.7 1628.3,323.7 1588,323.9" fill="#5C6B9E" stroke="#5C6B9E" stroke-width=".7" stroke-linejoin="round"/>
</svg>



<!-- ===== STATUS BAR ===== -->
<div class="a" style="left:0;top:1083px;width:1909px;height:27px;background:#ECEAF1"></div>
<svg style="left:5px;top:1088px" width="13" height="13" viewBox="0 0 13 13"><g fill="#6B7F9E"><rect x="2.6" y="0" width="2.6" height="2.6" rx=".7"/><rect x="7" y="0" width="2.6" height="2.6" rx=".7"/><rect x="0" y="5" width="2.6" height="2.6" rx=".7"/><rect x="4.8" y="5" width="2.6" height="2.6" rx=".7"/><rect x="9.6" y="5" width="2.6" height="2.6" rx=".7"/><rect x="2.6" y="10.2" width="2.6" height="2.6" rx=".7"/><rect x="7" y="10.2" width="2.6" height="2.6" rx=".7"/></g></svg>
<div class="t" style="left:25px;top:1086px;letter-spacing:-.4px">Ready</div>

</div>
</body>
</html>
